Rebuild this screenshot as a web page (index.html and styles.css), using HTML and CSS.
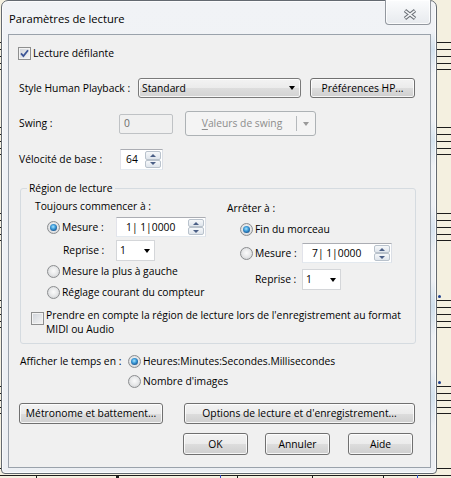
FILE: index.html
```html
<!DOCTYPE html>
<html lang="fr">
<head>
<meta charset="utf-8">
<title>Paramètres de lecture</title>
<link rel="stylesheet" href="styles.css">
</head>
<body>
<div class="score" aria-hidden="true">
  <div class="staff g1"></div>
  <div class="staff g2"></div>
  <div class="staff g3"></div>
  <div class="staff g4"></div>
  <div class="staff g5"></div>
  <div class="line l1"></div>
  <div class="line l2"></div>
  <span class="note n1"></span>
  <span class="note n2"></span>
  <span class="tick k1"></span>
  <span class="tick k2"></span>
  <span class="tick k3 blue"></span>
  <span class="tick k4"></span>
  <span class="tick k5"></span>
  <span class="tick k6"></span>
  <span class="tick k7 blue"></span>
</div>

<div class="window">
  <div class="titlebar">
    <div class="title">Paramètres de lecture</div>
    <div class="close">
      <svg width="14" height="11" viewBox="0 0 14 11">
        <path d="M2 1.5 12 9.5M12 1.5 2 9.5" stroke="#6d7278" stroke-width="3.6" fill="none"/>
        <path d="M2.4 1.8 11.6 9.2M11.6 1.8 2.4 9.2" stroke="#f5f6f8" stroke-width="1.5" fill="none"/>
      </svg>
    </div>
  </div>
  <div class="content">
    <div class="row r-scroll">
      <span class="check on"><svg width="9" height="9" viewBox="0 0 9 9"><path d="M1 4.4 3.4 7 8 1.2" fill="none" stroke="#3c5596" stroke-width="1.8"/></svg></span>
      <span>Lecture défilante</span>
    </div>
    <div class="row r-style">
      <span class="lbl lbl-style">Style Human Playback :</span>
      <div class="combo"><span>Standard</span><span class="tri"></span></div>
      <div class="btn btn-hp">Préférences HP...</div>
    </div>
    <div class="row r-swing">
      <span class="lbl lbl-swing">Swing :</span>
      <div class="field off f-swing">0</div>
      <div class="split">
        <span class="split-main"><u>V</u>aleurs de swing</span>
        <span class="split-sep"></span>
        <span class="split-arrow"><span class="tri gray"></span></span>
      </div>
    </div>
    <div class="row r-velo">
      <span class="lbl lbl-velo">Vélocité de base :</span>
      <div class="field spin f-velo">
        <span class="val">64</span>
        <span class="spinbtns"><span class="sb"><span class="up"></span></span><span class="sb"><span class="dn"></span></span></span>
      </div>
    </div>

    <div class="group">
      <div class="group-title">Région de lecture</div>
      <div class="cols">
        <div class="col col-left">
          <div class="col-title">Toujours commencer à :</div>
          <div class="opt o-mes">
            <span class="radio on"></span>
            <span class="olbl w-mes1">Mesure :</span>
            <div class="field spin f-pos">
              <span class="val">1|&nbsp;1|0000</span>
              <span class="spinbtns"><span class="sb"><span class="up"></span></span><span class="sb"><span class="dn"></span></span></span>
            </div>
          </div>
          <div class="sub s-rep1">
            <span class="olbl w-rep1">Reprise :</span>
            <div class="drop"><span>1</span><span class="tri"></span></div>
          </div>
          <div class="opt o-left"><span class="radio"></span><span>Mesure la plus à gauche</span></div>
          <div class="opt o-counter"><span class="radio"></span><span>Réglage courant du compteur</span></div>
        </div>
        <div class="col col-right">
          <div class="col-title ct-right">Arrêter à :</div>
          <div class="opt o-end"><span class="radio on"></span><span>Fin du morceau</span></div>
          <div class="opt o-mes2">
            <span class="radio"></span>
            <span class="olbl w-mes2">Mesure :</span>
            <div class="field spin f-pos">
              <span class="val">7|&nbsp;1|0000</span>
              <span class="spinbtns"><span class="sb"><span class="up"></span></span><span class="sb"><span class="dn"></span></span></span>
            </div>
          </div>
          <div class="sub s-rep2">
            <span class="olbl w-rep2">Reprise :</span>
            <div class="drop"><span>1</span><span class="tri"></span></div>
          </div>
        </div>
      </div>
      <div class="rec">
        <span class="check"></span>
        <span class="rec-text">Prendre en compte la région de lecture lors de l'enregistrement au format<br>MIDI ou Audio</span>
      </div>
    </div>

    <div class="timefmt">
      <span class="lbl">Afficher le temps en :</span>
      <div class="opt"><span class="radio on"></span><span>Heures:Minutes:Secondes.Millisecondes</span></div>
      <span></span>
      <div class="opt"><span class="radio"></span><span>Nombre d'images</span></div>
    </div>

    <div class="row r-btns1">
      <div class="btn btn-metro">Métronome et battement...</div>
      <div class="btn btn-opts">Options de lecture et d'enregistrement...</div>
    </div>
    <div class="row r-btns2">
      <div class="btn btn-dlg btn-ok">OK</div>
      <div class="btn btn-dlg btn-cancel">Annuler</div>
      <div class="btn btn-dlg btn-help">Aide</div>
    </div>
  </div>
</div>
</body>
</html>
```

FILE: styles.css
```css
* { box-sizing: border-box; }
html, body { margin: 0; padding: 0; }
body {
  width: 451px;
  height: 478px;
  overflow: hidden;
  position: relative;
  background: #f4f0e0;
  font-family: "Open Sans", "Noto Sans", sans-serif;
  font-size: 10.3px;
  line-height: 15px;
  color: #000;
}

/* score behind the dialog */
.score { position: absolute; inset: 0; }
.staff {
  position: absolute;
  left: 0;
  right: 0;
  height: 1px;
  background: #1c1c1c;
  box-shadow: 0 7px #1c1c1c, 0 14px #1c1c1c, 0 21px #1c1c1c, 0 27px #1c1c1c;
}
.g1 { top: 42px; }
.g2 { top: 127px; }
.g3 { top: 213px; }
.g4 { top: 300px; }
.g5 { top: 386px; }
.line { position: absolute; left: 0; right: 0; height: 1px; background: #1c1c1c; }
.l1 { top: 468px; }
.l2 { top: 475px; }
.note { position: absolute; left: 438px; width: 3px; height: 3px; background: #1d3f8f; border-radius: 50%; }
.n1 { top: 295px; }
.n2 { top: 381px; }
.tick { position: absolute; top: 475px; width: 1px; height: 3px; background: #1c1c1c; }
.tick.blue { background: #2f4fd0; }
.k1 { left: 36px; }
.k2 { left: 116px; width: 3px; }
.k3 { left: 220px; }
.k4 { left: 237px; }
.k5 { left: 312px; }
.k6 { left: 383px; }
.k7 { left: 417px; }

/* window frame */
.window {
  position: relative;
  z-index: 1;
  margin-left: 1px;
  width: 436px;
  height: 474px;
  border: 1px solid #646a71;
  border-radius: 7px 7px 4px 4px;
  background:
    linear-gradient(to bottom,
      transparent 30px, #d3e2ee 48px, transparent 72px,
      transparent 118px, #d6e4ef 140px, transparent 165px,
      transparent 205px, #d8e5f0 228px, transparent 252px,
      transparent 280px, #cfdfec 305px, transparent 335px,
      transparent 370px, #d3e2ee 395px, transparent 425px) right 0 top 0 / 5px 100% no-repeat,
    linear-gradient(#f1f3f6, #eceff3);
  padding: 0 5px 5px 6px;
  display: flex;
  flex-direction: column;
  box-shadow: inset 0 0 0 1px rgba(255, 255, 255, 0.75);
}
.titlebar {
  height: 33px;
  display: flex;
  justify-content: space-between;
  align-items: flex-start;
}
.title {
  font-size: 11.2px;
  line-height: 16px;
  margin: 10px 0 0 1px;
}
.close {
  width: 46px;
  height: 25px;
  margin-top: -1px;
  border: 1px solid #92979e;
  border-top: none;
  border-radius: 0 0 4px 4px;
  background: linear-gradient(#fbfcfd, #e7eaee);
  box-shadow: inset 0 0 0 1px rgba(255, 255, 255, 0.8);
  display: flex;
  justify-content: center;
  padding: 9px 0 0 3px;
}

/* dialog client area */
.content {
  height: 434px;
  border: 1px solid #9aa2ab;
  background: #f0f0f0;
  padding-left: 10px;
  display: flex;
  flex-direction: column;
}
.row { display: flex; align-items: center; flex: none; }
.lbl { flex: none; white-space: nowrap; }

.r-scroll { height: 13px; margin: 12px 0 0 -1px; gap: 2px; }
.r-style { height: 20px; margin-top: 18px; }
.lbl-style { width: 119px; }
.r-swing { height: 25px; margin-top: 13px; }
.lbl-swing { width: 100px; }
.r-velo { height: 21px; margin-top: 13px; }
.lbl-velo { width: 101px; }

/* checkbox */
.check {
  flex: none;
  width: 13px;
  height: 13px;
  border: 1px solid #8e8f8f;
  background: linear-gradient(135deg, #cfd3d9, #f6f6f6);
  box-shadow: inset 0 0 0 1px #f3f3f3;
  display: flex;
  align-items: center;
  justify-content: center;
}

/* radio */
.radio {
  flex: none;
  position: relative;
  width: 13px;
  height: 13px;
  border-radius: 50%;
  border: 1px solid #8b8d8f;
  background: radial-gradient(circle at 50% 45%, #fbfbfb 0, #e9eaeb 45%, #c9cbce 100%);
}
.radio.on::after {
  content: "";
  position: absolute;
  left: 2px;
  top: 2px;
  width: 7px;
  height: 7px;
  border-radius: 50%;
  background: radial-gradient(circle at 45% 40%, #a8e4ff 0, #3a9ad8 40%, #154c86 80%, #0d3463 100%);
}

/* buttons */
.btn {
  flex: none;
  border: 1px solid #707070;
  border-radius: 3px;
  background: linear-gradient(#f3f3f3 0, #ebebeb 50%, #dddddd 50%, #cfcfcf 100%);
  box-shadow: inset 0 0 0 1px rgba(255, 255, 255, 0.8);
  display: flex;
  align-items: center;
  justify-content: center;
  white-space: nowrap;
}
.btn-hp { width: 105px; height: 20px; margin-left: 9px; }

/* combobox */
.combo {
  flex: none;
  width: 163px;
  height: 20px;
  border: 1px solid #7a7a7a;
  border-radius: 3px;
  background: linear-gradient(#f3f3f3 0, #ebebeb 50%, #dddddd 50%, #d3d3d3 100%);
  box-shadow: inset 0 0 0 1px rgba(255, 255, 255, 0.8);
  display: flex;
  align-items: center;
  justify-content: space-between;
  padding: 0 5px 0 3px;
}
.tri {
  width: 0;
  height: 0;
  border-left: 3.5px solid transparent;
  border-right: 3.5px solid transparent;
  border-top: 4px solid #000;
}
.tri.gray { border-top-color: #9a9a9a; }

/* text fields */
.field {
  flex: none;
  height: 20px;
  background: #fff;
  border: 1px solid;
  border-color: #abadb3 #dbdfe6 #e3e9ef #e2e3ea;
  display: flex;
  align-items: center;
}
.field.off {
  background: #f0f0f0;
  border: 1px solid #bfc2c5;
  border-radius: 2px;
  color: #6d6d6d;
  padding-left: 4px;
}
.f-swing { width: 54px; }

.split {
  flex: none;
  width: 131px;
  height: 25px;
  margin-left: 12px;
  border: 1px solid #adb2b5;
  border-radius: 3px;
  background: #f4f4f4;
  color: #8d8d8d;
  display: flex;
  align-items: center;
}
.split-main { flex: 1; text-align: center; padding-left: 2px; }
.split-main u { text-decoration-thickness: 1px; text-underline-offset: 2px; }
.split-sep { width: 1px; height: 15px; background: #b5b9bc; }
.split-arrow { width: 18px; display: flex; justify-content: center; }

.spin { padding: 1px 1px 1px 0; align-items: stretch; }
.spin .val { flex: 1; display: flex; align-items: center; white-space: nowrap; }
.f-velo { width: 43px; height: 21px; }
.f-velo .val { padding-left: 5px; }
.f-pos { width: 90px; }
.f-pos .val { padding-left: 9px; }
.spinbtns { width: 16px; display: flex; flex-direction: column; }
.sb {
  flex: 1;
  border: 1px solid #b9c2cc;
  border-radius: 2px;
  background: linear-gradient(#f6f8fa, #dfe5ec);
  display: flex;
  align-items: center;
  justify-content: center;
}
.up, .dn { width: 0; height: 0; border-left: 3px solid transparent; border-right: 3px solid transparent; }
.up { border-bottom: 3px solid #4b5f86; }
.dn { border-top: 3px solid #4b5f86; }

.drop {
  flex: none;
  width: 39px;
  height: 21px;
  background: #fff;
  border: 1px solid #d4d6d9;
  display: flex;
  align-items: center;
  justify-content: space-between;
  padding: 0 4px 0 3px;
}

/* group box */
.group {
  flex: none;
  width: 396px;
  height: 156px;
  margin: 18px 0 0 1px;
  border: 1px solid #d5dbe0;
  border-radius: 3px;
  display: flex;
  flex-direction: column;
}
.group-title {
  width: fit-content;
  margin: -8px 0 0 6px;
  padding: 0 2px;
  background: #f0f0f0;
}
.cols { display: flex; margin-top: 3px; padding-left: 14px; }
.col { display: flex; flex-direction: column; }
.col-left { width: 192px; }
.col-title { white-space: nowrap; }
.ct-right { margin-top: 2px; }
.opt { display: flex; align-items: center; gap: 2px; white-space: nowrap; }
.olbl { flex: none; }
.sub { display: flex; align-items: center; }

.col-left .opt { padding-left: 12px; }
.o-mes { height: 20px; margin-top: 3px; }
.w-mes1 { width: 52px; }
.s-rep1 { height: 21px; margin-top: 3px; padding-left: 28px; }
.w-rep1 { width: 53px; }
.o-left { height: 15px; margin-top: 3px; }
.o-counter { height: 15px; margin-top: 6px; }

.col-right .opt { padding-left: 13px; }
.o-end { height: 15px; margin-top: 6px; }
.o-mes2 { height: 20px; margin-top: 6px; }
.w-mes2 { width: 45px; }
.s-rep2 { height: 21px; margin-top: 6px; padding-left: 28px; }
.w-rep2 { width: 47px; }

.rec { display: flex; align-items: flex-start; gap: 2px; margin: 8px 0 0 10px; }
.rec .check { margin-top: 4px; }
.rec-text { line-height: 14px; white-space: nowrap; }

/* time format */
.timefmt {
  flex: none;
  display: grid;
  grid-template-columns: 108px auto;
  grid-auto-rows: 15px;
  row-gap: 5px;
  align-items: center;
  margin: 10px 0 0 1px;
}
.timefmt .opt { height: 15px; }

.r-btns1 { height: 21px; margin-top: 14px; }
.btn-metro { width: 144px; height: 21px; }
.btn-opts { width: 231px; height: 21px; margin-left: 21px; }
.r-btns2 { height: 22px; margin-top: 9px; }
.btn-dlg { width: 65px; height: 22px; }
.btn-ok { margin-left: 164px; }
.btn-cancel { margin-left: 17px; }
.btn-help { margin-left: 18px; }
```
